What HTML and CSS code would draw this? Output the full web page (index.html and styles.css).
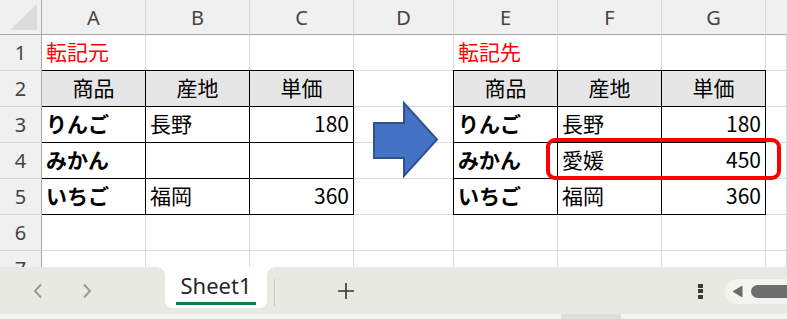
FILE: index.html
```html
<!DOCTYPE html>
<html lang="ja">
<head>
<meta charset="utf-8">
<title>Sheet1</title>
<link rel="stylesheet" href="styles.css">
</head>
<body>
<div class="app">
  <div class="sheet">
    <div class="grid">
      <div class="ch corner"><span class="tri"></span></div>
      <div class="ch">A</div><div class="ch">B</div><div class="ch">C</div><div class="ch">D</div>
      <div class="ch">E</div><div class="ch">F</div><div class="ch">G</div><div class="ch last"></div>

      <div class="rh">1</div>
      <div class="c red">転記元</div><div class="c"></div><div class="c"></div><div class="c"></div>
      <div class="c red">転記先</div><div class="c"></div><div class="c"></div><div class="c"></div>

      <div class="rh">2</div>
      <div class="c t th tt">商品</div><div class="c t th tt">産地</div><div class="c t th tt">単価</div><div class="c"></div>
      <div class="c t th tt tl">商品</div><div class="c t th tt">産地</div><div class="c t th tt">単価</div><div class="c"></div>

      <div class="rh">3</div>
      <div class="c t b">りんご</div><div class="c t">長野</div><div class="c t num">180</div><div class="c"></div>
      <div class="c t b tl">りんご</div><div class="c t">長野</div><div class="c t num">180</div><div class="c"></div>

      <div class="rh">4</div>
      <div class="c t b">みかん</div><div class="c t"></div><div class="c t num"></div><div class="c"></div>
      <div class="c t b tl">みかん</div><div class="c t">愛媛</div><div class="c t num">450</div><div class="c"></div>

      <div class="rh">5</div>
      <div class="c t b">いちご</div><div class="c t">福岡</div><div class="c t num">360</div><div class="c"></div>
      <div class="c t b tl">いちご</div><div class="c t">福岡</div><div class="c t num">360</div><div class="c"></div>

      <div class="rh">6</div>
      <div class="c"></div><div class="c"></div><div class="c"></div><div class="c"></div>
      <div class="c"></div><div class="c"></div><div class="c"></div><div class="c"></div>

      <div class="rh">7</div>
      <div class="c"></div><div class="c"></div><div class="c"></div><div class="c"></div>
      <div class="c"></div><div class="c"></div><div class="c"></div><div class="c"></div>
    </div>

    <svg class="arrow" width="72" height="80" viewBox="0 0 72 80" aria-hidden="true">
      <polygon points="4,23 34,23 34,3 67,39.5 34,76 34,58 4,58" fill="#4472c4" stroke="#2f528f" stroke-width="2" stroke-linejoin="miter"/>
    </svg>
    <div class="highlight"></div>
  </div>

  <div class="tabbar">
    <div class="nav">
      <svg class="navbtn" width="12" height="16" viewBox="0 0 12 16"><polyline points="9,1.5 3,8 9,14.5" fill="none" stroke="#9a9a9a" stroke-width="2"/></svg>
      <svg class="navbtn" width="12" height="16" viewBox="0 0 12 16"><polyline points="3,1.5 9,8 3,14.5" fill="none" stroke="#9a9a9a" stroke-width="2"/></svg>
    </div>
    <div class="tab"><span class="tabname">Sheet1</span></div>
    <div class="sep"></div>
    <svg class="plus" width="18" height="18" viewBox="0 0 18 18"><path d="M9 1V17M1 9H17" stroke="#333" stroke-width="1.6"/></svg>
    <div class="spacer"></div>
    <div class="dots"><i></i><i></i><i></i></div>
    <div class="hscroll">
      <svg class="larr" width="12" height="13" viewBox="0 0 12 13"><path d="M10.5 1.5 L10.5 11.5 Q10.5 12.5 9.5 12 L1.5 7.2 Q0.8 6.5 1.5 5.8 L9.5 1 Q10.5 0.5 10.5 1.5Z" fill="#6b6b6b"/></svg>
      <span class="thumb"></span>
    </div>
  </div>
  <div class="status"><span class="seg"></span></div>
</div>
</body>
</html>
```

FILE: styles.css
```css
* { box-sizing: border-box; }
html, body { margin: 0; padding: 0; }
body {
  width: 787px;
  height: 319px;
  overflow: hidden;
  background: #fff;
  font-family: "Noto Sans CJK JP", "Noto Sans", sans-serif;
}
.app { width: 787px; height: 319px; display: flex; flex-direction: column; }

.sheet {
  position: relative;
  height: 267px;
  overflow: hidden;
  flex: none;
}
.grid {
  display: grid;
  grid-template-columns: 42px 104px 104px 104px 100px 104px 104px 104px 1fr;
  grid-template-rows: 35px repeat(7, 36px);
}

.ch {
  background: #f0f0f0;
  border-right: 1px solid #d6d6d6;
  border-bottom: 1px solid #a9a9a9;
  display: flex;
  align-items: center;
  justify-content: center;
  font-family: "Noto Sans", "Open Sans", sans-serif;
  font-size: 20px;
  color: #444;
  padding-top: 1px;
}
.ch.corner { border-right-color: #a9a9a9; position: relative; }
.ch.last { border-right: none; }
.tri {
  position: absolute;
  left: 10px;
  top: 4px;
  width: 27px;
  height: 26px;
  background: #dcdcdc;
  clip-path: polygon(100% 0, 100% 100%, 0 100%);
}

.rh {
  background: #f0f0f0;
  border-right: 1px solid #a9a9a9;
  border-bottom: 1px solid #d6d6d6;
  display: flex;
  align-items: center;
  justify-content: center;
  font-family: "Noto Sans", "Open Sans", sans-serif;
  font-size: 20px;
  color: #444;
}

.c {
  border-right: 1px solid #dadada;
  border-bottom: 1px solid #dadada;
  display: flex;
  align-items: center;
  padding: 0 4px 2px 4px;
  font-size: 21px;
  line-height: 1;
  color: #000;
  white-space: nowrap;
}
.c.red { color: #ff0000; }
.c.t { border-right-color: #000; border-bottom-color: #000; }
.c.th { background: #e7e6e6; justify-content: center; }
.c.b { font-weight: 700; }
.c.num { justify-content: flex-end; }
.c.tt { box-shadow: 0 -1px 0 #000; }
.c.tl { box-shadow: -1px 0 0 #000; }
.c.tt.tl { box-shadow: -1px 0 0 #000, 0 -1px 0 #000, -1px -1px 0 #000; }

.arrow {
  position: absolute;
  left: 370px;
  top: 100px;
}
.highlight {
  position: absolute;
  left: 546px;
  top: 138px;
  width: 235px;
  height: 42px;
  border: 4px solid #ff0000;
  border-radius: 9px;
}

.tabbar {
  height: 47px;
  flex: none;
  background: #e9e9e3;
  display: flex;
  align-items: center;
}
.nav {
  width: 165px;
  display: flex;
  align-items: center;
  padding-left: 32px;
  gap: 37px;
}
.navbtn { display: block; }
.tab {
  align-self: flex-start;
  position: relative;
  width: 102px;
  height: 41px;
  background: #fff;
  border-radius: 0 0 7px 7px;
  display: flex;
  justify-content: center;
  padding-top: 4px;
}
.tab::before, .tab::after {
  content: "";
  position: absolute;
  top: 0;
  width: 8px;
  height: 8px;
}
.tab::before {
  left: -8px;
  background: radial-gradient(circle at 0 100%, #e9e9e3 7.5px, #fff 8px);
}
.tab::after {
  right: -8px;
  background: radial-gradient(circle at 100% 100%, #e9e9e3 7.5px, #fff 8px);
}
.tabname {
  font-family: "Noto Sans", "Open Sans", sans-serif;
  font-size: 22px;
  line-height: 28px;
  height: 34px;
  color: #262626;
  padding: 0 4px;
  border-bottom: 3px solid #107c41;
}
.sep {
  width: 1px;
  height: 27px;
  background: #c9c9c4;
  margin-left: 7px;
  margin-top: 3px;
}
.plus { margin-left: 62px; display: block; }
.spacer { flex: 1; }
.dots {
  display: flex;
  flex-direction: column;
  gap: 1.5px;
  margin-right: 22px;
  margin-top: 1px;
}
.dots i { display: block; width: 5px; height: 4px; background: #3a3a3a; }
.hscroll {
  width: 70px;
  height: 25px;
  margin-top: 1px;
  margin-right: -8px;
  border-radius: 12.5px 0 0 12.5px;
  background: #f3f3ef;
  display: flex;
  align-items: center;
  padding-left: 7px;
  gap: 7px;
}
.larr { display: block; }
.thumb {
  flex: 1;
  height: 13px;
  border-radius: 6.5px 0 0 6.5px;
  background: #6e6e6e;
}
.status {
  height: 5px;
  flex: none;
  background: #f3f3f3;
  position: relative;
}
.seg {
  position: absolute;
  left: 561px;
  top: 0;
  width: 60px;
  height: 5px;
  background: #dedede;
}
```
